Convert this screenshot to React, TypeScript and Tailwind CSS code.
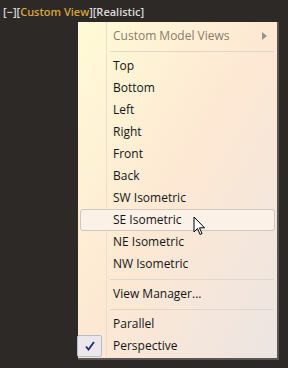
const views = [
  "Top",
  "Bottom",
  "Left",
  "Right",
  "Front",
  "Back",
  "SW Isometric",
  "SE Isometric",
  "NE Isometric",
  "NW Isometric",
];

function Separator() {
  return (
    <div className="flex h-[8px] items-center pl-[32px] pr-[3px]">
      <div className="h-px w-full bg-[#e2d6c8]" />
    </div>
  );
}

function Item({ label, hover, checked }: { label: string; hover?: boolean; checked?: boolean }) {
  return (
    <div className="relative flex h-[22px] items-center pl-[35px]">
      {hover && (
        <div className="absolute inset-y-0 left-[2px] right-[2px] rounded-[3px] border border-[#cfc8c0] bg-[#fbf1e6]" />
      )}
      {checked && (
        <div className="absolute left-[-1px] top-0 flex h-[22px] w-[25px] items-center justify-center rounded-[2px] border border-[#b6bccb] bg-[#ebe7ea]">
          <svg width="12" height="12" viewBox="0 0 12 12">
            <path d="M2 6.5 L4.5 9.5 L10 2" fill="none" stroke="#1c2878" strokeWidth="1.8" />
          </svg>
        </div>
      )}
      <span className="relative text-[#141414]">{label}</span>
    </div>
  );
}

export default function App() {
  return (
    <div
      className="relative h-[368px] w-[288px] overflow-hidden bg-[#2c2926] text-[12px]"
      style={{ fontFamily: '"Open Sans", "Noto Sans", sans-serif' }}
    >
      {/* viewport label */}
      <div className="px-[3px] pt-[3px] text-[11px] font-semibold leading-[18px] text-[#dcdcdc]">
        [−][<span className="text-[#d9a53a]">Custom View</span>][Realistic]
      </div>

      {/* context menu */}
      <div className="absolute left-[78px] top-[22px] w-[201px] border-r-2 border-b-2 border-[#5a5550]">
        <div className="relative bg-gradient-to-br from-[#fffbd6] via-[#fde8d3] to-[#ece5e3] pt-[3px] pb-[1px]">
          <div className="absolute left-[28px] top-0 bottom-0 w-px bg-[#eadfce]" />
          <div className="relative flex h-[22px] items-center justify-between pl-[35px] pr-[10px] text-[#8c7b6e]">
            <span>Custom Model Views</span>
            <svg width="5" height="8" viewBox="0 0 5 8">
              <path d="M0 0 L5 4 L0 8 Z" fill="#9a928c" />
            </svg>
          </div>
          <Separator />
          {views.map((v) => (
            <Item key={v} label={v} hover={v === "SE Isometric"} />
          ))}
          <Separator />
          <Item label="View Manager..." />
          <Separator />
          <Item label="Parallel" />
          <Item label="Perspective" checked />
        </div>
      </div>

      {/* mouse cursor */}
      <svg className="absolute left-[193px] top-[216px]" width="13" height="21" viewBox="0 0 13 21">
        <path
          d="M1 1 L1 16 L4.5 12.5 L7 18.5 L9 17.5 L6.5 11.8 L11.5 11.8 Z"
          fill="#ffffff"
          stroke="#000000"
          strokeWidth="1"
          strokeLinejoin="round"
        />
      </svg>
    </div>
  );
}
